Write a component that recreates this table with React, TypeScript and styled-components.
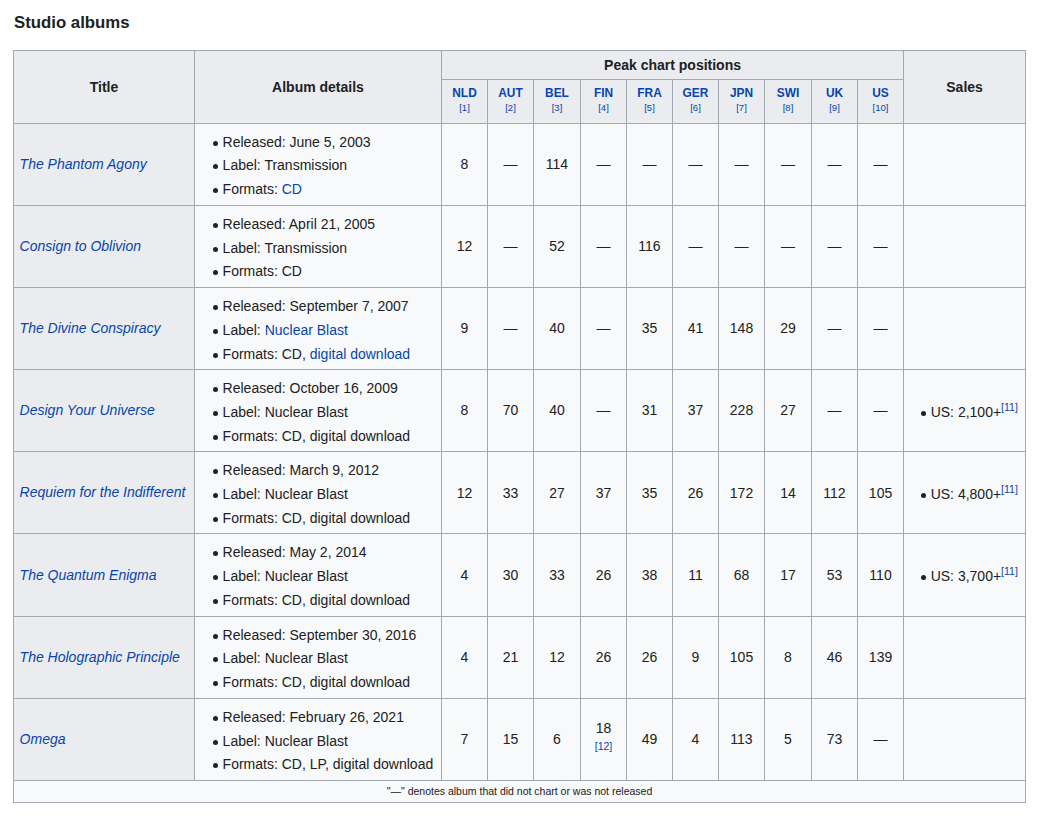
import { createGlobalStyle, styled } from "styled-components";

const GlobalStyle = createGlobalStyle`
  body {
    margin: 0;
    background: #fff;
    color: #202122;
    font-family: "Liberation Sans", Arial, sans-serif;
  }
`;

const Page = styled.div`
  padding: 11px 13px 10px;
`;

const Heading = styled.h3`
  margin: 0 0 15px 1px;
  font-size: 16.8px;
  line-height: 24px;
  font-weight: bold;
`;

const Table = styled.table`
  width: 1012px;
  table-layout: fixed;
  border-collapse: collapse;
  border: 1px solid #a2a9b1;
  background: #f8f9fa;
  font-size: 14px;
  color: #202122;
`;

const Th = styled.th<{ $row?: boolean }>`
  border: 1px solid #a2a9b1;
  background: #eaecf0;
  padding: ${(p) => (p.$row ? "2.8px 5.6px" : "3.8px 5.6px 2.8px")};
  font-weight: ${(p) => (p.$row ? "normal" : "bold")};
  text-align: ${(p) => (p.$row ? "left" : "center")};
  font-size: 14px;
  line-height: 21px;
  vertical-align: middle;
`;

const ChartTh = styled.th`
  border: 1px solid #a2a9b1;
  background: #eaecf0;
  padding: 5px 2px 8px;
  text-align: center;
  vertical-align: top;
  font-weight: bold;
`;

const Abbr = styled.a`
  display: block;
  font-size: 11.9px;
  line-height: 16px;
  color: #0645ad;
  text-decoration: none;
`;

const Ref = styled.a`
  display: block;
  font-size: 9.5px;
  line-height: 14px;
  font-weight: normal;
  color: #0645ad;
  text-decoration: none;
`;

const Td = styled.td<{ $center?: boolean }>`
  border: 1px solid #a2a9b1;
  padding: 2.8px 5.6px;
  text-align: ${(p) => (p.$center ? "center" : "left")};
  vertical-align: middle;
  line-height: 22.4px;
`;

const TitleLink = styled.a`
  color: #0645ad;
  font-style: italic;
  text-decoration: none;
`;

const Link = styled.a`
  color: #0645ad;
  text-decoration: none;
`;

const List = styled.ul<{ $indent?: number }>`
  margin: 4.2px 0 0 ${(p) => p.$indent ?? 12}px;
  padding: 0;
  list-style: none;
`;

const Item = styled.li`
  position: relative;
  padding-left: 10px;
  margin-bottom: 1.4px;
  line-height: 22.4px;
  white-space: nowrap;

  &::before {
    content: "";
    position: absolute;
    left: 0;
    top: 10px;
    width: 5px;
    height: 5px;
    border-radius: 50%;
    background: #202122;
  }
`;

const Sup = styled.sup`
  font-size: 10.5px;
  line-height: 1;
  vertical-align: 6px;
  a {
    color: #0645ad;
    text-decoration: none;
  }
`;

const SubRef = styled.a`
  display: block;
  font-size: 10.5px;
  line-height: 12px;
  margin-bottom: 10px;
  color: #0645ad;
  text-decoration: none;
`;

const Note = styled.td`
  border: 1px solid #a2a9b1;
  padding: 3px 4px 4px;
  text-align: center;
  font-size: 10.5px;
  line-height: 14px;
`;

type Part = string | { link: string };

type Album = {
  title: string;
  released: string;
  label: Part[];
  formats: Part[];
  peaks: string[];
  finRef?: string;
  sales?: string;
};

const charts = [
  ["NLD", "1"],
  ["AUT", "2"],
  ["BEL", "3"],
  ["FIN", "4"],
  ["FRA", "5"],
  ["GER", "6"],
  ["JPN", "7"],
  ["SWI", "8"],
  ["UK", "9"],
  ["US", "10"],
];

const widths = [181, 247, 46, 46, 47, 46, 46, 46, 46, 47, 46, 46, 122];

const D = "—";

const albums: Album[] = [
  {
    title: "The Phantom Agony",
    released: "June 5, 2003",
    label: ["Transmission"],
    formats: [{ link: "CD" }],
    peaks: ["8", D, "114", D, D, D, D, D, D, D],
  },
  {
    title: "Consign to Oblivion",
    released: "April 21, 2005",
    label: ["Transmission"],
    formats: ["CD"],
    peaks: ["12", D, "52", D, "116", D, D, D, D, D],
  },
  {
    title: "The Divine Conspiracy",
    released: "September 7, 2007",
    label: [{ link: "Nuclear Blast" }],
    formats: ["CD, ", { link: "digital download" }],
    peaks: ["9", D, "40", D, "35", "41", "148", "29", D, D],
  },
  {
    title: "Design Your Universe",
    released: "October 16, 2009",
    label: ["Nuclear Blast"],
    formats: ["CD, digital download"],
    peaks: ["8", "70", "40", D, "31", "37", "228", "27", D, D],
    sales: "US: 2,100+",
  },
  {
    title: "Requiem for the Indifferent",
    released: "March 9, 2012",
    label: ["Nuclear Blast"],
    formats: ["CD, digital download"],
    peaks: ["12", "33", "27", "37", "35", "26", "172", "14", "112", "105"],
    sales: "US: 4,800+",
  },
  {
    title: "The Quantum Enigma",
    released: "May 2, 2014",
    label: ["Nuclear Blast"],
    formats: ["CD, digital download"],
    peaks: ["4", "30", "33", "26", "38", "11", "68", "17", "53", "110"],
    sales: "US: 3,700+",
  },
  {
    title: "The Holographic Principle",
    released: "September 30, 2016",
    label: ["Nuclear Blast"],
    formats: ["CD, digital download"],
    peaks: ["4", "21", "12", "26", "26", "9", "105", "8", "46", "139"],
  },
  {
    title: "Omega",
    released: "February 26, 2021",
    label: ["Nuclear Blast"],
    formats: ["CD, LP, digital download"],
    peaks: ["7", "15", "6", "18", "49", "4", "113", "5", "73", D],
    finRef: "12",
  },
];

function Parts({ parts }: { parts: Part[] }) {
  return (
    <>
      {parts.map((p, i) =>
        typeof p === "string" ? (
          <span key={i}>{p}</span>
        ) : (
          <Link key={i} href="#">
            {p.link}
          </Link>
        )
      )}
    </>
  );
}

export default function App() {
  return (
    <Page>
      <GlobalStyle />
      <Heading>Studio albums</Heading>
      <Table>
        <colgroup>
          {widths.map((w, i) => (
            <col key={i} style={{ width: w }} />
          ))}
        </colgroup>
        <thead>
          <tr>
            <Th rowSpan={2}>Title</Th>
            <Th rowSpan={2}>Album details</Th>
            <Th colSpan={10}>Peak chart positions</Th>
            <Th rowSpan={2}>Sales</Th>
          </tr>
          <tr>
            {charts.map(([name, ref]) => (
              <ChartTh key={name}>
                <Abbr href="#">{name}</Abbr>
                <Ref href="#">[{ref}]</Ref>
              </ChartTh>
            ))}
          </tr>
        </thead>
        <tbody>
          {albums.map((a) => (
            <tr key={a.title}>
              <Th $row>
                <TitleLink href="#">{a.title}</TitleLink>
              </Th>
              <Td>
                <List>
                  <Item>Released: {a.released}</Item>
                  <Item>
                    Label: <Parts parts={a.label} />
                  </Item>
                  <Item>
                    Formats: <Parts parts={a.formats} />
                  </Item>
                </List>
              </Td>
              {a.peaks.map((p, i) => (
                <Td key={i} $center>
                  {p}
                  {i === 3 && a.finRef && <SubRef href="#">[{a.finRef}]</SubRef>}
                </Td>
              ))}
              <Td>
                {a.sales && (
                  <List $indent={11}>
                    <Item>
                      {a.sales}
                      <Sup>
                        <a href="#">[11]</a>
                      </Sup>
                    </Item>
                  </List>
                )}
              </Td>
            </tr>
          ))}
          <tr>
            <Note colSpan={13}>"—" denotes album that did not chart or was not released</Note>
          </tr>
        </tbody>
      </Table>
    </Page>
  );
}
